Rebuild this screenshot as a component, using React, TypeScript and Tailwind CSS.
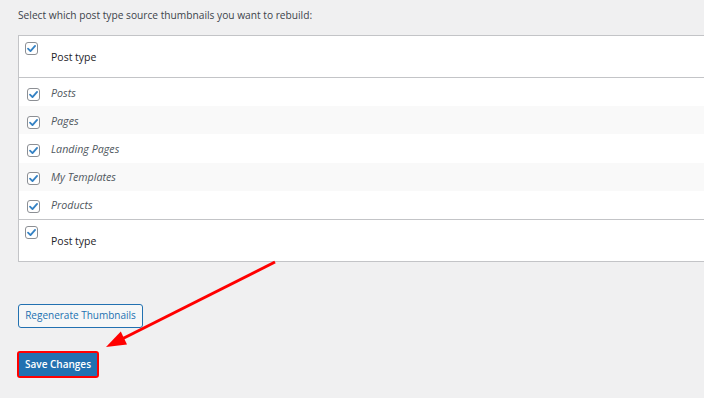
import React from 'react'

const postTypes = ['Posts', 'Pages', 'Landing Pages', 'My Templates', 'Products']

function Checkbox() {
  return (
    <span className="flex h-[13px] w-[13px] shrink-0 items-center justify-center rounded-[3px] border border-[#8c8f94] bg-white">
      <svg viewBox="0 0 12 12" className="h-[11px] w-[11px]">
        <path d="M2.2 6.2 L4.9 8.8 L9.9 3.2" fill="none" stroke="#3582c4" strokeWidth="2" strokeLinecap="round" strokeLinejoin="round" />
      </svg>
    </span>
  )
}

function HeadRow({ bottom }: { bottom?: boolean }) {
  return (
    <div className={`flex h-[42px] bg-white ${bottom ? 'border-t border-[#c3c4c7]' : 'border-b border-[#c3c4c7]'}`}>
      <div className="pl-[6px] pt-[6px]">
        <Checkbox />
      </div>
      <div className="pl-[13px] pt-[13px] text-[10.5px] leading-[16px] text-[#1d2327]">Post type</div>
    </div>
  )
}

export default function App() {
  return (
    <div className="relative h-[398px] w-full overflow-hidden bg-[#f0f0f1] pl-[18px] pt-[7px]" style={{ fontFamily: '"Open Sans", "Noto Sans", sans-serif' }}>
      <p className="text-[10.2px] leading-[17px] text-[#3c434a]">Select which post type source thumbnails you want to rebuild:</p>

      <div className="mt-[11px] w-[720px] border border-r-0 border-[#c3c4c7] bg-white">
        <HeadRow />
        {postTypes.map((name, i) => (
          <div key={name} className={`flex h-[28.2px] items-center ${i % 2 === 1 ? 'bg-[#f9f9f9]' : 'bg-white'}`}>
            <div className="pl-[8px] pt-[4px]">
              <Checkbox />
            </div>
            <span className="pl-[11px] pt-[1px] text-[10.7px] italic text-[#50575e]">{name}</span>
          </div>
        ))}
        <HeadRow bottom />
      </div>

      <button className="mt-[42px] block h-[24px] w-[125px] rounded-[3px] border border-[#2271b1] bg-[#f6f7f7] text-[10px] text-[#2271b1]">
        Regenerate Thumbnails
      </button>

      <div className="mt-[23px] inline-block rounded-[3px] border-2 border-[#ff0000] -ml-px">
        <button className="block h-[23px] w-[78px] bg-[#2271b1] text-[10px] font-semibold text-white">Save Changes</button>
      </div>

      <svg className="pointer-events-none absolute left-0 top-0" width="704" height="398">
        <line x1="275" y1="262" x2="118" y2="341" stroke="#ff0000" strokeWidth="3" />
        <polygon points="106,347 127,344.5 120.8,331.5" fill="#ff0000" />
      </svg>
    </div>
  )
}
